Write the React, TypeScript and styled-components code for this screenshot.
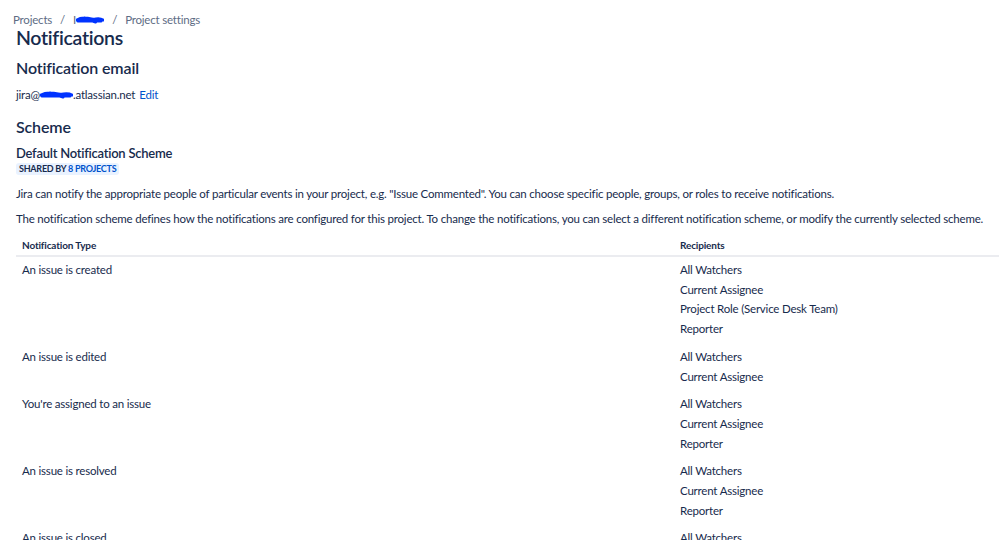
import React from "react";
import styled, { createGlobalStyle } from "styled-components";

const Global = createGlobalStyle`
  html, body { margin: 0; padding: 0; background: #fff; }
  body { font-family: Lato, "Noto Sans", sans-serif; color: #172b4d; }
`;

const Page = styled.div`
  padding: 12px 0 0 16px;
  display: flex;
  flex-direction: column;
`;

const Crumbs = styled.nav`
  display: flex;
  align-items: center;
  gap: 8px;
  margin-left: -3px;
  font-size: 11.5px;
  letter-spacing: -0.2px;
  line-height: 16px;
  color: #5e6c84;
`;

const Crumb = styled.span`
  display: inline-flex;
  align-items: center;
`;

const Title = styled.h1`
  margin: 0;
  font-size: 19.5px;
  font-weight: 600;
  letter-spacing: -0.3px;
  line-height: 20px;
`;

const H2 = styled.h2<{ $top: number }>`
  margin: ${(p) => p.$top}px 0 0;
  font-size: 16px;
  font-weight: 600;
  letter-spacing: -0.15px;
  line-height: 20px;
`;

const Email = styled.div`
  margin-top: 9px;
  font-size: 11.5px;
  letter-spacing: -0.2px;
  line-height: 16px;
  display: flex;
  align-items: center;
`;

const Link = styled.a`
  color: #0052cc;
  text-decoration: none;
  margin-left: 4px;
`;

const H3 = styled.h3`
  margin: 8px 0 0;
  font-size: 13px;
  font-weight: 600;
  letter-spacing: -0.25px;
  line-height: 16px;
`;

const Badge = styled.span`
  align-self: flex-start;
  margin-top: 2px;
  background: #e9f2ff;
  border-radius: 3px;
  padding: 0 3px;
  font-size: 9px;
  font-weight: 700;
  letter-spacing: -0.25px;
  line-height: 12px;
  text-transform: uppercase;
  color: #172b4d;
`;

const BadgeLink = styled.span`
  color: #0052cc;
`;

const Para = styled.p<{ $top: number }>`
  margin: ${(p) => p.$top}px 0 0;
  font-size: 11.5px;
  letter-spacing: -0.2px;
  line-height: 16px;
`;

const Table = styled.div`
  display: flex;
  flex-direction: column;
  margin-top: 8px;
`;

const HeadRow = styled.div`
  display: grid;
  grid-template-columns: 658px 1fr;
  border-bottom: 2px solid #ebecf0;
  padding: 3px 0 3px;
`;

const HeadCell = styled.div`
  padding-left: 6px;
  font-size: 10px;
  font-weight: 700;
  letter-spacing: -0.15px;
  line-height: 14px;
  color: #172b4d;
`;

const Row = styled.div`
  display: grid;
  grid-template-columns: 658px 1fr;
  padding: 3px 0 5px;
`;

const Cell = styled.div`
  padding-left: 6px;
  font-size: 11.5px;
  letter-spacing: -0.2px;
  line-height: 19.7px;
  display: flex;
  flex-direction: column;
`;

const Scribble = ({ w }: { w: number }) => (
  <svg width={w} height="10" viewBox={`0 0 ${w} 10`} style={{ display: "block" }}>
    <path
      d={`M1 5 C ${w * 0.2} 2, ${w * 0.4} 3, ${w * 0.55} 4 S ${w * 0.8} 2, ${w - 1} 5 M2 6 L ${w - 3} 6 M ${w * 0.3} 3 L ${w * 0.7} 7`}
      stroke="#0033ff"
      strokeWidth="3"
      fill="none"
      strokeLinecap="round"
    />
  </svg>
);

const rows: { type: string; recipients: string[] }[] = [
  { type: "An issue is created", recipients: ["All Watchers", "Current Assignee", "Project Role (Service Desk Team)", "Reporter"] },
  { type: "An issue is edited", recipients: ["All Watchers", "Current Assignee"] },
  { type: "You're assigned to an issue", recipients: ["All Watchers", "Current Assignee", "Reporter"] },
  { type: "An issue is resolved", recipients: ["All Watchers", "Current Assignee", "Reporter"] },
  { type: "An issue is closed", recipients: ["All Watchers", "Current Assignee", "Reporter"] },
];

export default function App() {
  return (
    <>
      <Global />
      <Page>
        <Crumbs>
          <Crumb>Projects</Crumb>
          <Crumb>/</Crumb>
          <Crumb>
            I<Scribble w={28} />
          </Crumb>
          <Crumb>/</Crumb>
          <Crumb>Project settings</Crumb>
        </Crumbs>
        <Title>Notifications</Title>
        <H2 $top={10}>Notification email</H2>
        <Email>
          jira@<Scribble w={33} />.atlassian.net<Link>Edit</Link>
        </Email>
        <H2 $top={14}>Scheme</H2>
        <H3>Default Notification Scheme</H3>
        <Badge>
          Shared by <BadgeLink>8 projects</BadgeLink>
        </Badge>
        <Para $top={11}>
          Jira can notify the appropriate people of particular events in your project, e.g. "Issue Commented". You can choose specific people, groups, or roles to receive notifications.
        </Para>
        <Para $top={9}>
          The notification scheme defines how the notifications are configured for this project. To change the notifications, you can select a different notification scheme, or modify the currently selected scheme.
        </Para>
        <Table>
          <HeadRow>
            <HeadCell>Notification Type</HeadCell>
            <HeadCell>Recipients</HeadCell>
          </HeadRow>
          {rows.map((r) => (
            <Row key={r.type}>
              <Cell>{r.type}</Cell>
              <Cell>
                {r.recipients.map((x) => (
                  <span key={x}>{x}</span>
                ))}
              </Cell>
            </Row>
          ))}
        </Table>
      </Page>
    </>
  );
}
